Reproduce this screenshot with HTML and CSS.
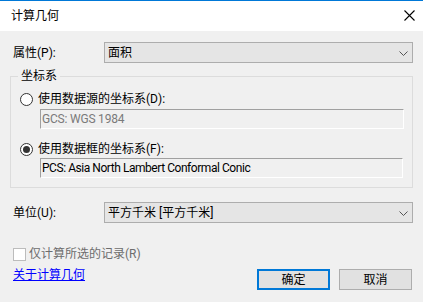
FILE: index.html
```html
<!DOCTYPE html>
<html lang="zh-CN">
<head>
    <meta charset="UTF-8">
    <title>计算几何</title>
    <link rel="stylesheet" href="styles.css">
</head>
<body>
    <div class="titlebar">
        <span class="title">计算几何</span>
        <svg class="close" width="11" height="11" viewBox="0 0 11 11">
            <path d="M0.5 0.5 L10.5 10.5 M10.5 0.5 L0.5 10.5" stroke="#000" stroke-width="1.1" fill="none"/>
        </svg>
    </div>

    <div class="dialog">
        <div class="field-row prop-row">
            <label class="field-label">属性(P):</label>
            <div class="combo">
                <span>面积</span>
                <svg class="chevron" width="9" height="5" viewBox="0 0 9 5">
                    <polyline points="0.5,0.5 4.5,4.5 8.5,0.5" stroke="#555" stroke-width="1" fill="none"/>
                </svg>
            </div>
        </div>

        <div class="group">
            <span class="legend">坐标系</span>
            <div class="radio-row">
                <span class="radio"></span>
                <span>使用数据源的坐标系(D):</span>
            </div>
            <div class="textbox muted">GCS: WGS 1984</div>
            <div class="radio-row second">
                <span class="radio checked"></span>
                <span>使用数据框的坐标系(F):</span>
            </div>
            <div class="textbox last">PCS: Asia North Lambert Conformal Conic</div>
        </div>

        <div class="field-row unit-row">
            <label class="field-label">单位(U):</label>
            <div class="combo">
                <span>平方千米 [平方千米]</span>
                <svg class="chevron" width="9" height="5" viewBox="0 0 9 5">
                    <polyline points="0.5,0.5 4.5,4.5 8.5,0.5" stroke="#555" stroke-width="1" fill="none"/>
                </svg>
            </div>
        </div>

        <div class="check-row">
            <span class="checkbox"></span>
            <span>仅计算所选的记录(R)</span>
        </div>

        <div class="footer">
            <a class="help-link" href="#">关于计算几何</a>
            <div class="buttons">
                <button class="btn btn-default">确定</button>
                <button class="btn">取消</button>
            </div>
        </div>
    </div>
</body>
</html>
```

FILE: styles.css
```css
html, body {
    margin: 0;
    padding: 0;
}
body {
    width: 423px;
    height: 301px;
    background: #f0f0f0;
    border-top: 1px solid #0078d7;
    font-family: Roboto, "Noto Sans CJK SC", sans-serif;
    font-size: 12px;
    line-height: 16px;
    color: #000;
    overflow: hidden;
}
.titlebar {
    height: 30px;
    background: #fff;
    display: flex;
    align-items: center;
    justify-content: space-between;
    padding: 0 8px 0 11px;
}
.title {
    font-size: 12px;
    margin-top: -1px;
}
.close {
    display: block;
    margin-top: -1px;
}
.dialog {
    padding: 0 10px;
}
.field-row {
    display: flex;
    align-items: center;
    height: 21px;
}
.prop-row {
    margin-top: 11px;
}
.unit-row {
    margin-top: 14px;
}
.field-label {
    width: 91px;
    padding-left: 3px;
}
.combo {
    flex: 1;
    height: 21px;
    box-sizing: border-box;
    border: 1px solid #adadad;
    background: #e5e5e5;
    display: flex;
    align-items: center;
    justify-content: space-between;
    padding: 0 4px 0 3px;
}
.chevron {
    display: block;
    margin-top: 1px;
}
.group {
    position: relative;
    margin-top: 13px;
    border: 1px solid #dcdcdc;
    padding: 14px 0 9px 9px;
}
.legend {
    position: absolute;
    left: 7px;
    top: -9px;
    padding: 0 3px;
    background: #f0f0f0;
}
.radio-row {
    display: flex;
    align-items: center;
    height: 16px;
}
.radio-row.second {
    margin-top: 12px;
}
.radio {
    width: 13px;
    height: 13px;
    box-sizing: border-box;
    border: 1px solid #333;
    border-radius: 50%;
    background: #fff;
    margin-right: 5px;
    position: relative;
}
.radio.checked::after {
    content: "";
    position: absolute;
    left: 2px;
    top: 2px;
    width: 7px;
    height: 7px;
    border-radius: 50%;
    background: #333;
}
.textbox {
    margin: 2px 0 0 20px;
    width: 364px;
    height: 20px;
    box-sizing: border-box;
    border-top: 1px solid #a0a0a0;
    border-left: 1px solid #a0a0a0;
    border-right: 1px solid #fff;
    border-bottom: 1px solid #fff;
    padding: 1px 0 0 1px;
    line-height: 16px;
    letter-spacing: -0.2px;
}
.textbox.muted {
    color: #7a7a7a;
}
.textbox.last {
    margin-top: 1px;
    width: 363px;
    letter-spacing: -0.45px;
}
.check-row {
    display: flex;
    align-items: center;
    height: 16px;
    margin-top: 23px;
    padding-left: 3px;
    color: #6d6d6d;
}
.checkbox {
    width: 13px;
    height: 13px;
    box-sizing: border-box;
    border: 1px solid #bcbcbc;
    background: #fff;
    margin-right: 3px;
}
.footer {
    display: flex;
    justify-content: space-between;
    align-items: flex-start;
    margin-top: 7px;
}
.help-link {
    color: #0000ff;
    text-decoration: underline;
    margin: -2px 0 0 3px;
}
.buttons {
    display: flex;
    gap: 9px;
    margin-right: 1px;
}
.btn {
    width: 73px;
    height: 21px;
    box-sizing: border-box;
    border: 1px solid #adadad;
    background: #e1e1e1;
    font-family: inherit;
    font-size: 12px;
    line-height: 16px;
    padding: 0;
    color: #000;
}
.btn-default {
    border: 2px solid #0078d7;
}
```
